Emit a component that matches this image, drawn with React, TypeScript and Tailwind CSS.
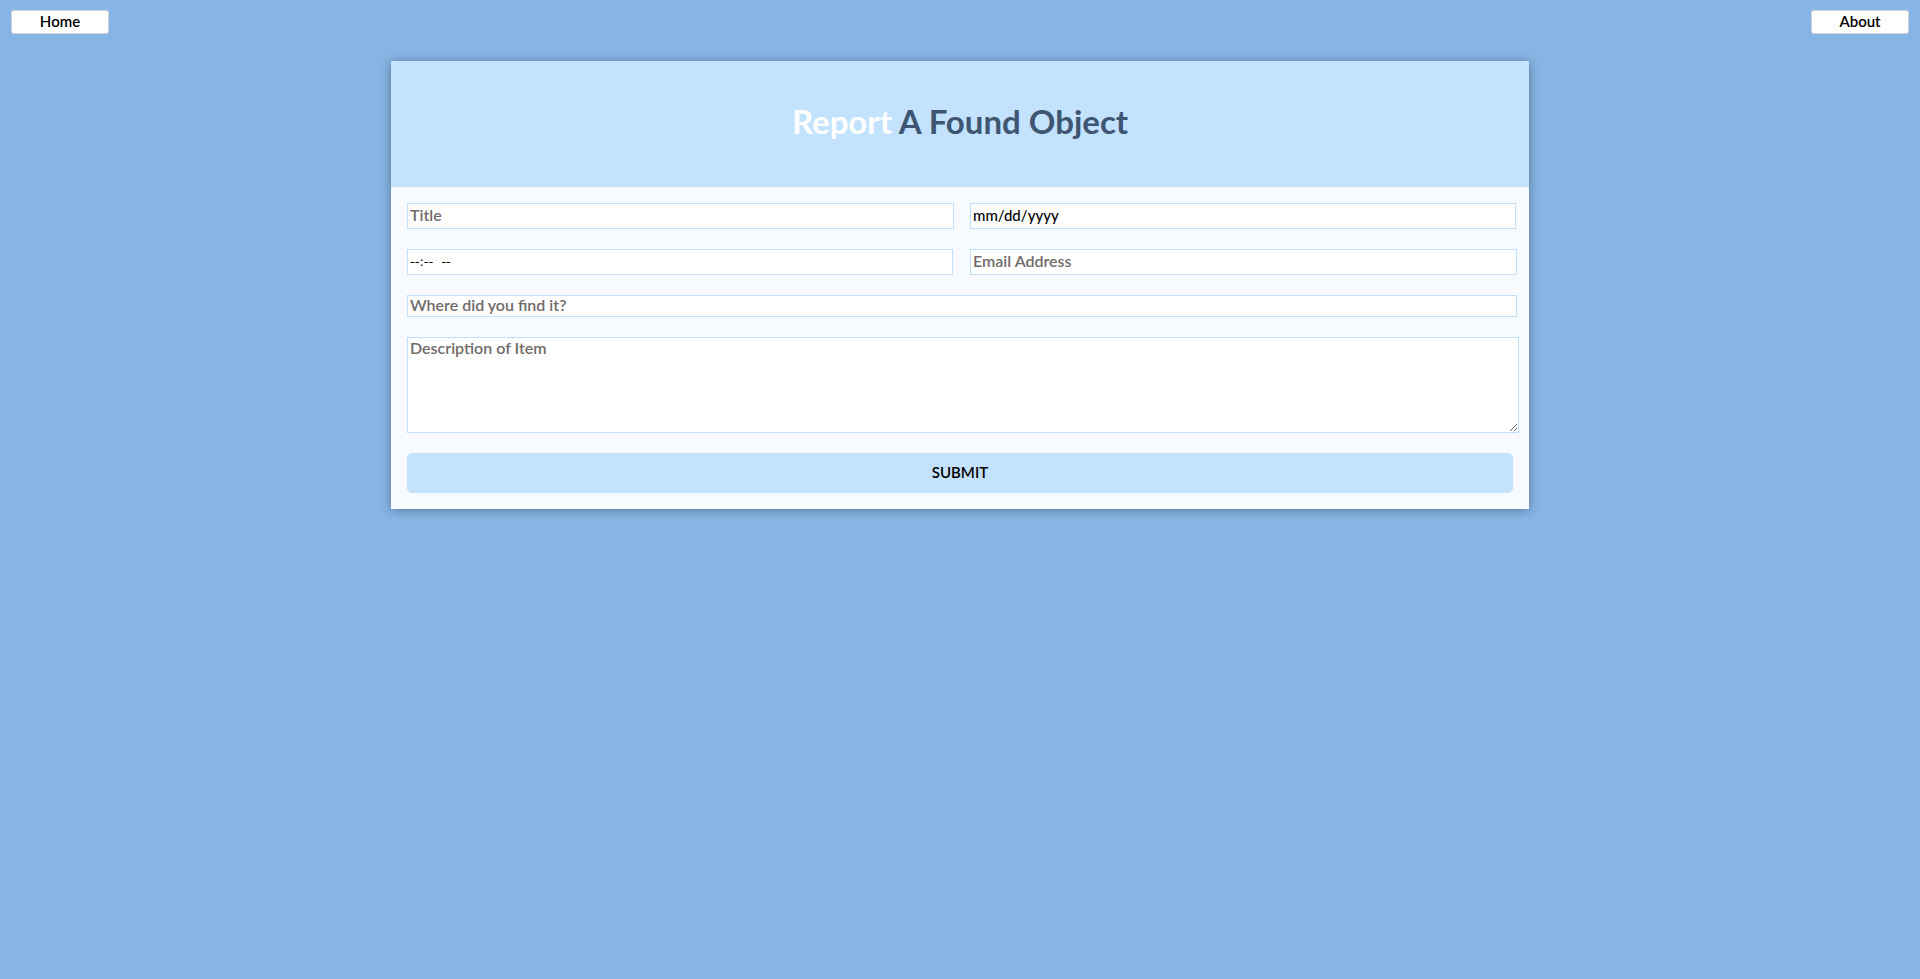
import React from "react";

const font = { fontFamily: "Lato, 'Noto Sans', sans-serif" };

export default function App() {
  return (
    <div className="min-h-screen w-full bg-[#86b4e4]" style={font}>
      <div className="flex justify-between px-[11px] pt-[10px]">
        <button className="h-[24px] w-[98px] rounded-[3px] border border-[#d4d4d4] bg-white pb-[2px] text-[15px] font-semibold leading-none text-black">
          Home
        </button>
        <button className="h-[24px] w-[98px] rounded-[3px] border border-[#d4d4d4] bg-white pb-[2px] text-[15px] font-semibold leading-none text-black">
          About
        </button>
      </div>

      <div className="mx-auto mt-[27px] w-[1138px] bg-[#f7fbff] shadow-[0_1px_10px_rgba(0,0,0,0.35)]">
        <div className="flex h-[126px] items-center justify-center bg-[#c3e2fe] pb-[6px]">
          <h1 className="text-[33px] font-bold leading-none text-[#3e5672]">
            <span className="text-white">Report</span> A Found Object
          </h1>
        </div>

        <form className="flex flex-col items-start px-[16px] pb-[16px] pt-[16px]">
          <div className="flex gap-[16px]">
            <input
              type="text"
              placeholder="Title"
              className="h-[26px] w-[547px] shrink-0 border border-[#c0dffb] bg-white px-[2px] pb-[3px] text-[16px] font-semibold text-black outline-none placeholder:text-[#716b69]"
            />
            <input
              type="text"
              defaultValue="mm/dd/yyyy"
              className="h-[26px] w-[546px] shrink-0 border border-[#c0dffb] bg-white px-[2px] pb-[3px] text-[15px] font-medium text-black outline-none"
            />
          </div>

          <div className="mt-[20px] flex gap-[17px]">
            <input
              type="text"
              defaultValue="--:--  --"
              className="h-[26px] w-[546px] shrink-0 border border-[#c0dffb] bg-white px-[2px] pb-[2px] text-[13px] text-black outline-none"
              style={{ fontFamily: "'DejaVu Sans', sans-serif", whiteSpace: "pre" }}
            />
            <input
              type="email"
              placeholder="Email Address"
              className="h-[26px] w-[547px] shrink-0 border border-[#c0dffb] bg-white px-[2px] pb-[3px] text-[16px] font-semibold text-black outline-none placeholder:text-[#716b69]"
            />
          </div>

          <input
            type="text"
            placeholder="Where did you find it?"
            className="mt-[20px] h-[22px] w-[1110px] shrink-0 border border-[#c0dffb] bg-white px-[2px] pb-[2px] text-[16px] font-semibold text-black outline-none placeholder:text-[#716b69]"
          />

          <textarea
            placeholder="Description of Item"
            className="mt-[20px] h-[96px] w-[1112px] shrink-0 border border-[#c0dffb] bg-white px-[2px] pt-0 text-[16px] leading-[20px] font-semibold text-black outline-none placeholder:text-[#716b69]"
          />

          <button
            type="button"
            className="mt-[20px] h-[40px] w-[1106px] rounded-[5px] bg-[#c3e2fe] pb-[2px] text-[15px] font-semibold text-black"
          >
            SUBMIT
          </button>
        </form>
      </div>
    </div>
  );
}
